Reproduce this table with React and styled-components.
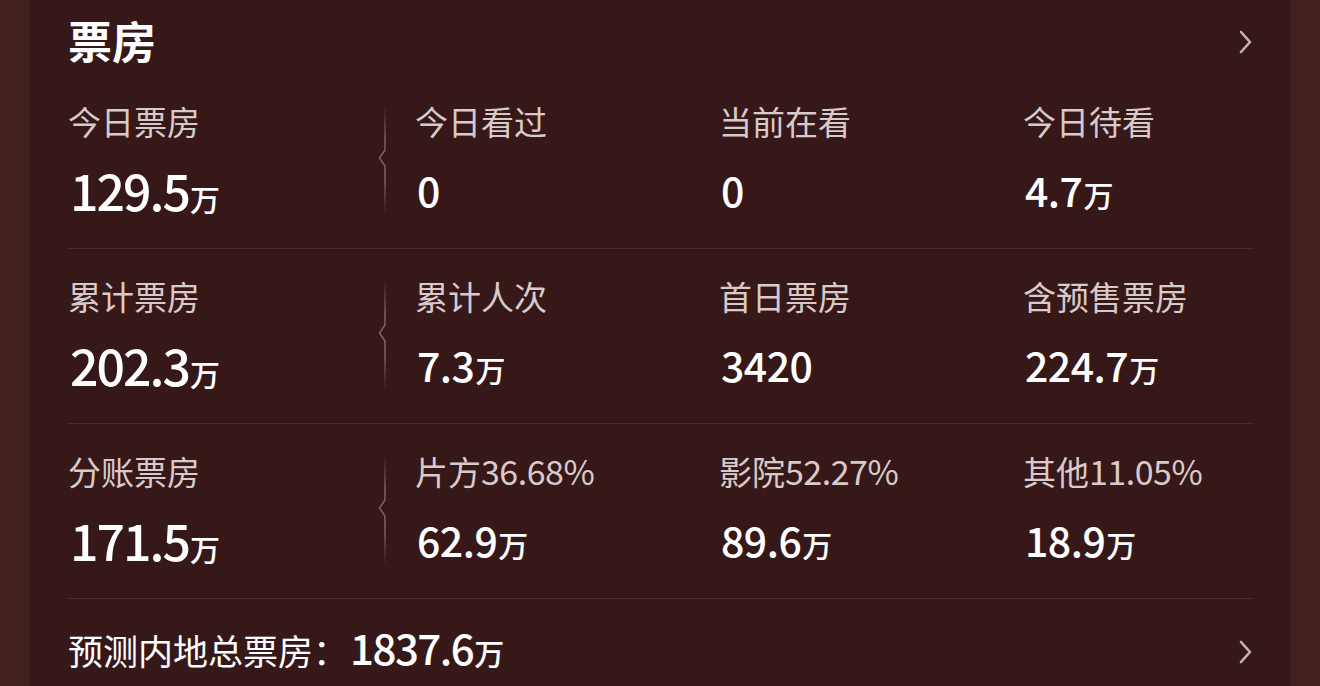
import React from "react";
import styled, { createGlobalStyle } from "styled-components";

const GlobalStyle = createGlobalStyle`
    html, body {
        margin: 0;
        padding: 0;
        background: #41201f;
        overflow: hidden;
    }
`;

const CJK = `"Noto Sans CJK SC", "Noto Sans", sans-serif`;

const rows = [
    [
        { label: "今日票房", num: "129.5", unit: "万" },
        { label: "今日看过", num: "0" },
        { label: "当前在看", num: "0" },
        { label: "今日待看", num: "4.7", unit: "万" },
    ],
    [
        { label: "累计票房", num: "202.3", unit: "万" },
        { label: "累计人次", num: "7.3", unit: "万" },
        { label: "首日票房", num: "3420" },
        { label: "含预售票房", num: "224.7", unit: "万" },
    ],
    [
        { label: "分账票房", num: "171.5", unit: "万" },
        { label: "片方", pct: "36.68%", num: "62.9", unit: "万" },
        { label: "影院", pct: "52.27%", num: "89.6", unit: "万" },
        { label: "其他", pct: "11.05%", num: "18.9", unit: "万" },
    ],
];

export default function App() {
    return (
        <Page>
            <GlobalStyle />
            <Card>
                <Header>
                    <Title>票房</Title>
                    <Chevron />
                </Header>
                {rows.map((row, i) => (
                    <Row key={i}>
                        <Stat item={row[0]} main />
                        <Separator />
                        {row.slice(1).map((item) => (
                            <Stat key={item.label} item={item} />
                        ))}
                    </Row>
                ))}
                <Footer>
                    <FooterText>
                        预测内地总票房：<FooterNum>1837.6</FooterNum>
                        <Unit>万</Unit>
                    </FooterText>
                    <Chevron />
                </Footer>
            </Card>
        </Page>
    );
}

function Stat({ item, main }) {
    return (
        <Cell>
            <Label>
                {item.label}
                {item.pct && <LabelNum>{item.pct}</LabelNum>}
            </Label>
            <Value>
                <Num $main={main}>{item.num}</Num>
                {item.unit && <Unit>{item.unit}</Unit>}
            </Value>
        </Cell>
    );
}

function Chevron() {
    return (
        <ChevronSvg width="16" height="26" viewBox="0 0 16 26">
            <path
                d="M3 3 L12 13 L3 23"
                fill="none"
                stroke="#c4b3b3"
                strokeWidth="2.6"
                strokeLinecap="round"
                strokeLinejoin="round"
            />
        </ChevronSvg>
    );
}

function Separator() {
    return (
        <SepSvg width="10" height="110" viewBox="0 0 10 110">
            <defs>
                <linearGradient id="sepfade" x1="0" y1="0" x2="0" y2="1">
                    <stop offset="0" stopColor="#8a6d6d" stopOpacity="0" />
                    <stop offset="0.3" stopColor="#8a6d6d" stopOpacity="0.9" />
                    <stop offset="0.7" stopColor="#8a6d6d" stopOpacity="0.9" />
                    <stop offset="1" stopColor="#8a6d6d" stopOpacity="0" />
                </linearGradient>
            </defs>
            <path
                d="M8 0 V45 L2.5 53 L8 61 V110"
                fill="none"
                stroke="url(#sepfade)"
                strokeWidth="1.4"
            />
        </SepSvg>
    );
}

const Page = styled.div`
    width: 1320px;
    height: 686px;
    display: flex;
    justify-content: center;
    background: #41201f;
`;

const Card = styled.div`
    width: 1260px;
    height: 686px;
    box-sizing: border-box;
    padding: 0 36px 0 38px;
    background: #361819;
    display: flex;
    flex-direction: column;
    overflow: hidden;

    & > * {
        flex-shrink: 0;
    }
`;

const Header = styled.div`
    height: 74px;
    display: flex;
    align-items: flex-start;
    justify-content: space-between;
    padding-top: 18px;
    box-sizing: border-box;
`;

const Title = styled.div`
    font-family: ${CJK};
    font-size: 44px;
    line-height: 44px;
    font-weight: 700;
    color: #ffffff;
`;

const ChevronSvg = styled.svg`
    display: block;
    margin-top: 11px;
    flex-shrink: 0;
`;

const Row = styled.div`
    display: grid;
    grid-template-columns: 309px 38px 304px 304px 1fr;
    align-items: start;
    padding: 31px 0 32px;
    border-bottom: 1px solid #4a2c2d;
`;

const Cell = styled.div`
    display: flex;
    flex-direction: column;
    gap: 26px;
`;

const Label = styled.div`
    font-family: ${CJK};
    font-size: 33px;
    line-height: 32px;
    height: 32px;
    color: #d9caca;
    white-space: nowrap;
    display: flex;
    align-items: baseline;
`;

const LabelNum = styled.span`
    font-size: 34px;
    letter-spacing: -0.5px;
`;

const Value = styled.div`
    height: 53px;
    line-height: 53px;
    display: flex;
    align-items: baseline;
    color: #ffffff;
    white-space: nowrap;
    font-family: ${CJK};
`;

const Num = styled.span`
    font-size: ${(p) => (p.$main ? "50px" : "41px")};
    font-weight: 500;
    margin-left: 2px;
    letter-spacing: ${(p) => (p.$main ? "-2px" : "-0.5px")};
`;

const Unit = styled.span`
    font-family: ${CJK};
    font-size: 30px;
    font-weight: 500;
    color: #ffffff;
    margin-left: 1px;
`;

const SepSvg = styled.svg`
    display: block;
`;

const Footer = styled.div`
    height: 94px;
    display: flex;
    align-items: center;
    justify-content: space-between;
`;

const FooterText = styled.div`
    font-family: ${CJK};
    font-size: 35px;
    color: #ffffff;
    display: flex;
    align-items: baseline;
    white-space: nowrap;
`;

const FooterNum = styled.span`
    font-size: 42px;
    font-weight: 500;
    margin-left: 2px;
    letter-spacing: -1.5px;
`;
